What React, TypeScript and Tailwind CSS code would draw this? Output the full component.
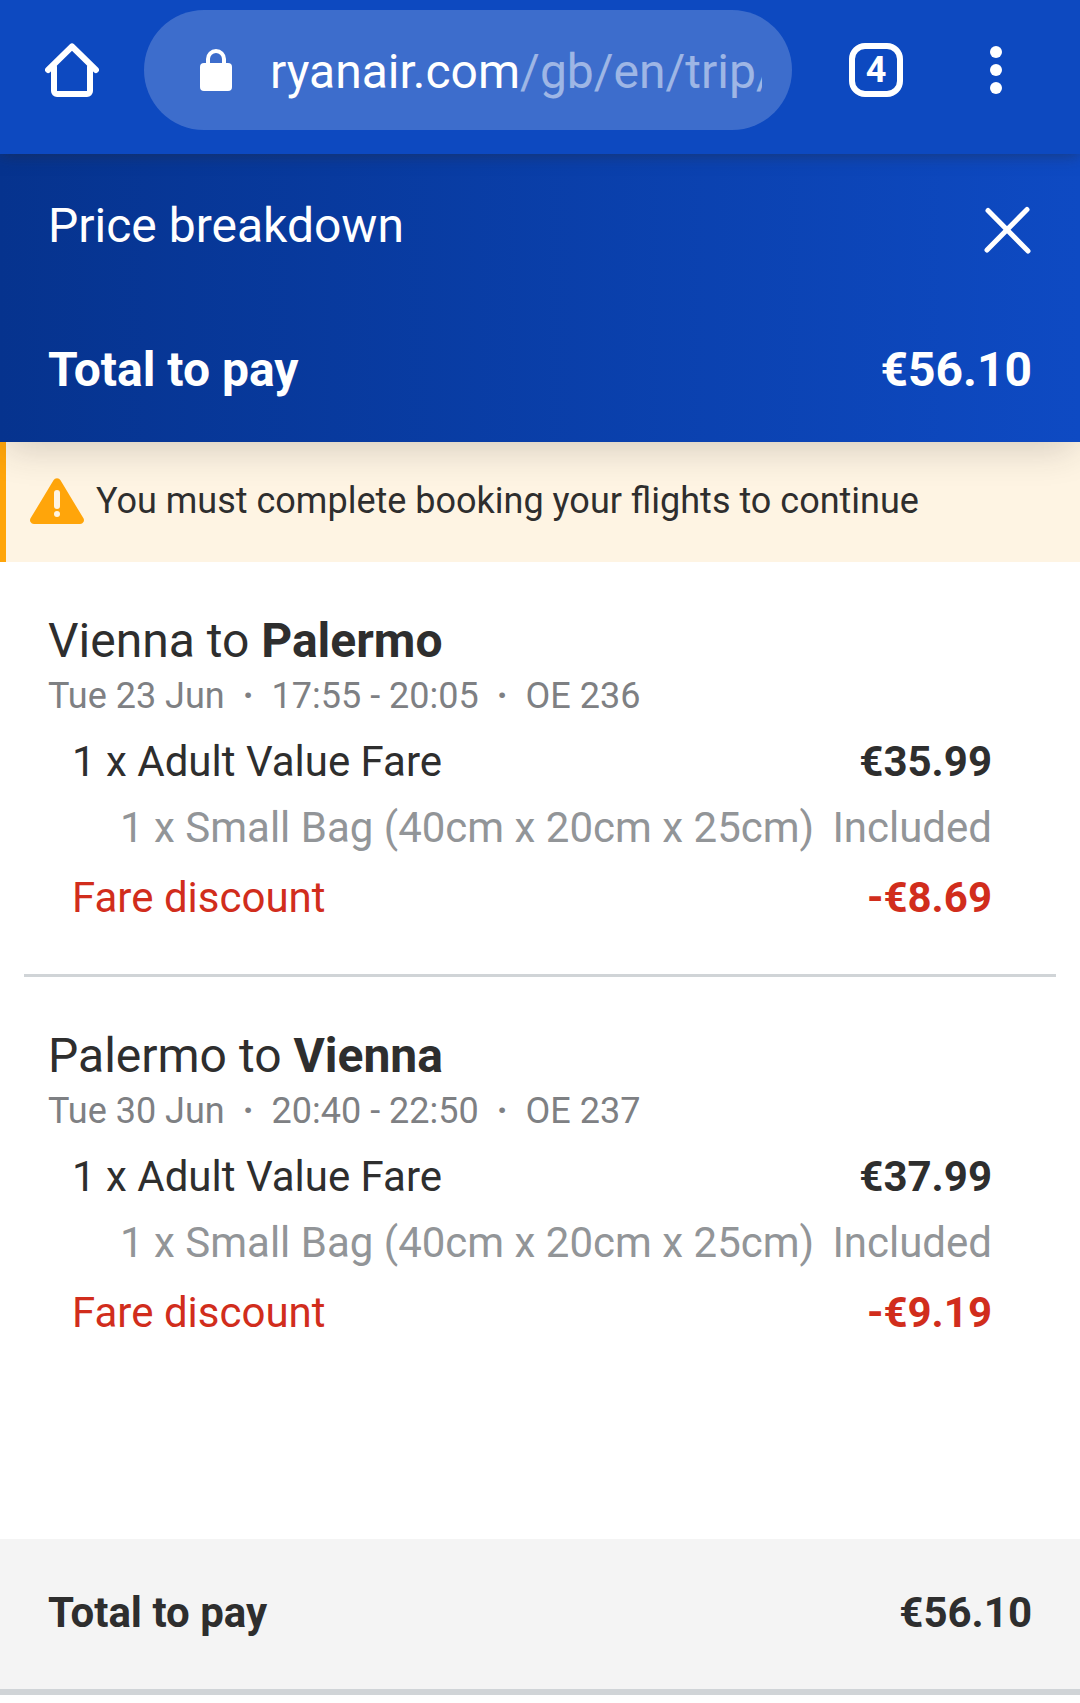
import { Fragment } from "react";

type Flight = {
  from: string;
  to: string;
  date: string;
  time: string;
  number: string;
  fare: string;
  discount: string;
};

const flights: Flight[] = [
  {
    from: "Vienna",
    to: "Palermo",
    date: "Tue 23 Jun",
    time: "17:55 - 20:05",
    number: "OE 236",
    fare: "€35.99",
    discount: "-€8.69",
  },
  {
    from: "Palermo",
    to: "Vienna",
    date: "Tue 30 Jun",
    time: "20:40 - 22:50",
    number: "OE 237",
    fare: "€37.99",
    discount: "-€9.19",
  },
];

function BrowserBar() {
  return (
    <div className="relative z-20 flex items-start bg-[#0d49c0] pt-[10px] pb-6 pl-[45px] pr-[78px] shadow-[0_0_15px_rgba(40,40,40,0.5)]">
      <button aria-label="Home" className="flex h-[120px] w-[54px] items-center">
        <svg width="54" height="54" viewBox="0 0 54 54" fill="none" stroke="#fff" strokeWidth="6" strokeLinejoin="round" strokeLinecap="round">
          <path d="M3 27 27 3.500 51 27" />
          <path d="M9 24v24a3 3 0 0 0 3 3h30a3 3 0 0 0 3-3V24" />
        </svg>
      </button>

      {/* Address */}
      <div className="ml-[45px] flex h-[120px] min-w-0 flex-1 items-center rounded-full bg-white/20 pl-14 pr-[30px]">
        <svg className="shrink-0" width="32" height="42" viewBox="0 0 32 42">
          <path d="M8 16V10a8 8 0 0 1 16 0v6" fill="none" stroke="#fff" strokeWidth="4" />
          <rect y="14" width="32" height="28" rx="4" fill="#fff" />
        </svg>
        <a href="#" className="ml-[38px] min-w-0 flex-1 overflow-hidden whitespace-nowrap pt-1 text-5xl leading-[72px] text-white/50">
          <span className="text-white">ryanair.com</span>/gb/en/trip/
        </a>
      </div>

      <div className="ml-[57px] flex h-[120px] items-center gap-[87px]">
        <button
          aria-label="Open tabs"
          className="flex h-[54px] w-[54px] items-center justify-center rounded-2xl border-6 border-white text-4xl font-bold text-white"
        >
          4
        </button>
        <button aria-label="Menu" className="flex flex-col items-center gap-[6px]">
          <span className="h-3 w-3 rounded-full bg-white" />
          <span className="h-3 w-3 rounded-full bg-white" />
          <span className="h-3 w-3 rounded-full bg-white" />
        </button>
      </div>
    </div>
  );
}

function Header() {
  return (
    <header className="relative z-10 bg-linear-to-r from-[#06338e] to-[#0e4ac3] px-12 pt-9 pb-9 text-5xl text-white shadow-[0_12px_36px_-6px_rgba(40,40,40,0.2)]">
      <div className="flex items-end justify-between">
        <h1 className="leading-[72px]">Price breakdown</h1>
        <button aria-label="Close" className="pb-2">
          <svg width="48" height="48" viewBox="0 0 48 48" stroke="#fff" strokeWidth="5" strokeLinecap="round">
            <path d="M4 4.500 44 45M43 3.500 3 44" />
          </svg>
        </button>
      </div>
      <div className="mt-18 flex justify-between font-bold leading-[72px]">
        <span>Total to pay</span>
        <span>€56.10</span>
      </div>
    </header>
  );
}

function Warning() {
  return (
    <div role="alert" className="flex h-[120px] items-center gap-3 border-l-6 border-[#ffa50a] bg-[#fef4e3] pb-[3px] pl-6">
      <svg className="shrink-0" width="54" height="48" viewBox="0 0 54 48">
        <path d="M23.500 3.300a4 4 0 0 1 7 0l22.800 37.800a3.800 3.800 0 0 1-3.300 5.900H4a3.800 3.800 0 0 1-3.300-5.900Z" fill="#ffa50a" />
        <rect x="24" y="13" width="6" height="19" rx="3" fill="#fef4e3" />
        <circle cx="27" cy="37" r="3" fill="#fef4e3" />
      </svg>
      <p className="text-4xl leading-12">You must complete booking your flights to continue</p>
    </div>
  );
}

function FlightSection({ flight }: { flight: Flight }) {
  return (
    <section className="px-12 pt-12 pb-[43px]">
      <h2 className="text-5xl leading-[62px]">
        {flight.from} to <b>{flight.to}</b>
      </h2>
      <p className="flex gap-[18px] text-4xl leading-12 text-[#7e8083]">
        <span>{flight.date}</span>
        <span className="font-bold">·</span>
        <span>{flight.time}</span>
        <span className="font-bold">·</span>
        <span>{flight.number}</span>
      </p>

      <dl className="mt-[9px] pl-6 pr-10 text-[42px] leading-[66px]">
        <div className="flex justify-between">
          <dt>1 x Adult Value Fare</dt>
          <dd className="font-bold">{flight.fare}</dd>
        </div>
        <div className="flex justify-between pl-12 text-[#929598]">
          <dt>1 x Small Bag (40cm x 20cm x 25cm)</dt>
          <dd>Included</dd>
        </div>
        <div className="mt-1 flex justify-between text-[#d12d1c]">
          <dt>Fare discount</dt>
          <dd className="font-bold">{flight.discount}</dd>
        </div>
      </dl>
    </section>
  );
}

export default function App() {
  return (
    <div className="flex min-h-screen flex-col bg-white font-[Roboto,sans-serif] text-[#2e2e2e]">
      <BrowserBar />
      <Header />

      <main className="flex-1">
        <Warning />
        {flights.map((flight, i) => (
          <Fragment key={flight.number}>
            {i > 0 && <hr className="mx-6 border-t-3 border-[#d0d4d7]" />}
            <FlightSection flight={flight} />
          </Fragment>
        ))}
      </main>

      <footer className="mb-2 flex justify-between border-b-6 border-[#d0d4d7] bg-[#f4f4f4] px-12 pt-[41px] pb-[43px] text-[42px] font-bold leading-[66px]">
        <span>Total to pay</span>
        <span>€56.10</span>
      </footer>
    </div>
  );
}
